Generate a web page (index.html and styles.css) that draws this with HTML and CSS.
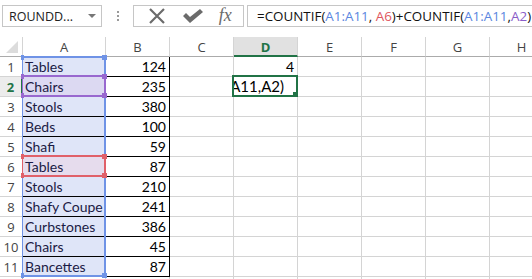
FILE: index.html
```html
<!DOCTYPE html>
<html>

<head>
    <title>COUNTIF</title>
    <link rel="stylesheet" href="styles.css">
</head>

<body>

    <div class="toolbar">
        <div class="name-box">
            <span>ROUNDD...</span>
            <span class="drop"></span>
        </div>
        <div class="grip">
            <i></i><i></i><i></i>
        </div>
        <div class="buttons">
            <svg class="icon" width="20" height="16" viewBox="0 0 20 16">
                <path d="M3 1 L17 15 M17 1 L3 15" stroke="#6b6b6b" stroke-width="2.2" fill="none" />
            </svg>
            <svg class="icon" width="22" height="16" viewBox="0 0 22 16">
                <path d="M1 8 L4 5 L8 9 L18 1 L21 4 L8 15 Z" fill="#6b6b6b" />
            </svg>
            <span class="fx">fx</span>
        </div>
        <div class="formula">
            =COUNTIF(<span class="ref-blue">A1:A11</span>, <span class="ref-red">A6</span>)+COUNTIF(<span class="ref-blue">A1:A11</span>,<span class="ref-purple">A2</span>)
        </div>
    </div>

    <div class="sheet">
        <div class="grid">
            <div class="hd corner"><span class="tri"></span></div>
            <div class="hd">A</div>
            <div class="hd">B</div>
            <div class="hd">C</div>
            <div class="hd active-col">D</div>
            <div class="hd">E</div>
            <div class="hd">F</div>
            <div class="hd">G</div>
            <div class="hd">H</div>
        </div>
        <div id="rows"></div>

        <!-- formula range highlights -->
        <div class="range range-blue"><i class="h tl"></i><i class="h tr"></i><i class="h bl"></i><i class="h br"></i></div>
        <div class="range range-purple"><i class="h tl"></i><i class="h tr"></i><i class="h bl"></i><i class="h br"></i></div>
        <div class="range range-red"><i class="h tl"></i><i class="h tr"></i><i class="h bl"></i><i class="h br"></i></div>
        <div class="cursor"><span>A11,A2)</span><i></i></div>
    </div>

    <script>
        const data = [
            ["Tables", 124], ["Chairs", 235], ["Stools", 380], ["Beds", 100],
            ["Shafi", 59], ["Tables", 87], ["Stools", 210], ["Shafy Coupe", 241],
            ["Curbstones", 386], ["Chairs", 45], ["Bancettes", 87], ["", ""]
        ];

        const rows = document.getElementById("rows");
        data.forEach(([name, qty], i) => {
            const n = i + 1;
            const row = document.createElement("div");
            row.className = "grid row" + (n === 2 ? " active-row" : "") + (n <= 11 ? " filled" : "");
            let extra = "";
            if (n === 2) extra = " sel-purple";
            if (n === 6) extra = " sel-red";
            row.innerHTML =
                `<div class="hd rn">${n <= 11 ? n : ""}</div>` +
                `<div class="c a${n <= 11 ? " in-range" : ""}${extra}">${name}</div>` +
                `<div class="c b num">${qty}</div>` +
                `<div class="c"></div>` +
                `<div class="c num">${n === 1 ? 4 : ""}</div>` +
                `<div class="c"></div><div class="c"></div><div class="c"></div><div class="c"></div>`;
            rows.appendChild(row);
        });
    </script>

</body>

</html>
```

FILE: styles.css
```css
body {
    margin: 0;
    width: 532px;
    height: 279px;
    overflow: hidden;
    background: #ffffff;
    font-family: 'Open Sans', 'Noto Sans', sans-serif;
    color: #000;
}

/* formula bar */

.toolbar {
    height: 37px;
    display: flex;
    align-items: flex-start;
    padding-top: 5px;
    box-sizing: border-box;
}

.name-box {
    margin-left: 2px;
    width: 100px;
    height: 22px;
    border: 1px solid #c6c6c6;
    box-sizing: border-box;
    display: flex;
    align-items: center;
    justify-content: space-between;
    padding: 0 5px 0 6px;
    font-size: 12.5px;
    color: #222;
}

.drop {
    width: 0;
    height: 0;
    border-left: 4px solid transparent;
    border-right: 4px solid transparent;
    border-top: 4px solid #777;
}

.grip {
    width: 31px;
    display: flex;
    flex-direction: column;
    align-items: center;
    gap: 2px;
    padding-top: 6px;
}

.grip i {
    width: 2px;
    height: 2px;
    background: #9a9a9a;
}

.buttons {
    width: 111px;
    height: 22px;
    border: 1px solid #c6c6c6;
    box-sizing: border-box;
    display: flex;
    align-items: center;
    justify-content: space-around;
    padding: 0 4px 0 6px;
}

.fx {
    font-family: 'Liberation Serif', serif;
    font-style: italic;
    font-size: 18px;
    color: #6b6b6b;
    line-height: 1;
    margin-top: -2px;
}

.formula {
    margin-left: 3px;
    flex: 1;
    height: 22px;
    border: 1px solid #c6c6c6;
    border-right: none;
    box-sizing: border-box;
    padding-left: 9px;
    font-size: 13.4px;
    line-height: 20px;
    white-space: nowrap;
    overflow: hidden;
    color: #111;
}

.ref-blue {
    color: #5a86e0;
}

.ref-red {
    color: #e0565e;
}

.ref-purple {
    color: #8a5cc8;
}

/* sheet */

.sheet {
    position: relative;
    height: 242px;
    overflow: hidden;
}

.grid {
    display: grid;
    grid-template-columns: 23px 83px 64px 64px 64px 64px 64px 64px 64px;
}

.hd {
    height: 20px;
    border-right: 1px solid #d4d4d4;
    border-bottom: 1px solid #ababab;
    box-sizing: border-box;
    text-align: center;
    font-size: 13px;
    line-height: 20px;
    color: #444;
}

.corner {
    position: relative;
}

.tri {
    position: absolute;
    right: 4px;
    bottom: 3px;
    width: 0;
    height: 0;
    border-left: 12px solid transparent;
    border-bottom: 12px solid #dcdcdc;
}

.active-col {
    background: #e1e1e1;
    border-bottom: 2px solid #217346;
    color: #217346;
    font-weight: 700;
}

.row .hd.rn {
    border-bottom: 1px solid #d4d4d4;
    border-right: 1px solid #ababab;
    font-size: 13px;
    line-height: 20px;
}

.active-row .hd.rn {
    color: #217346;
    font-weight: 700;
    background: #ececec;
    border-right: 2px solid #217346;
}

.c {
    height: 20px;
    box-sizing: border-box;
    border-right: 1px solid #d4d4d4;
    border-bottom: 1px solid #d4d4d4;
    font-family: Lato, 'Open Sans', sans-serif;
    font-size: 14px;
    line-height: 20px;
    padding: 0 3px 0 2px;
    white-space: nowrap;
    overflow: hidden;
}

.num {
    text-align: right;
}

.filled .a,
.filled .b {
    border-bottom-color: #000;
}

.filled .b {
    border-right-color: #000;
}

.in-range {
    background: #dfe5f8;
    color: #1b1b45;
}

.sel-purple {
    background: #dcd9f2;
}

.sel-red {
    background: #e6dced;
}

/* formula reference outlines */

.range {
    position: absolute;
    left: 22px;
    width: 84px;
    box-sizing: border-box;
}

.range-blue {
    top: 19px;
    height: 221px;
    border: 2px solid #6f93e6;
    border-left-width: 1px;
}

.range-purple {
    top: 38px;
    height: 22px;
    border: 2px solid #9868cf;
    border-left-width: 1px;
}

.range-red {
    top: 118px;
    height: 22px;
    border: 2px solid #e06069;
    border-left-width: 1px;
}

.h {
    position: absolute;
    width: 5px;
    height: 5px;
}

.range-blue .h {
    background: #6f93e6;
}

.range-purple .h {
    background: #9868cf;
}

.range-red .h {
    background: #e06069;
}

.h.tl {
    left: -2px;
    top: -3px;
    width: 3px;
}

.h.tr {
    right: -3px;
    top: -3px;
}

.h.bl {
    left: -2px;
    bottom: -3px;
    width: 3px;
}

.h.br {
    right: -3px;
    bottom: -3px;
}

.cursor {
    position: absolute;
    left: 232px;
    top: 38px;
    width: 66px;
    height: 22px;
    box-sizing: border-box;
    border: 2px solid #217346;
    background: #fff;
    overflow: hidden;
    font-family: Lato, 'Open Sans', sans-serif;
    font-size: 15px;
    line-height: 18px;
    display: flex;
    justify-content: flex-end;
}

.cursor span {
    white-space: nowrap;
    padding-right: 12px;
}

.cursor i {
    position: absolute;
    right: -1px;
    bottom: -1px;
    width: 4px;
    height: 4px;
    background: #217346;
}
```
